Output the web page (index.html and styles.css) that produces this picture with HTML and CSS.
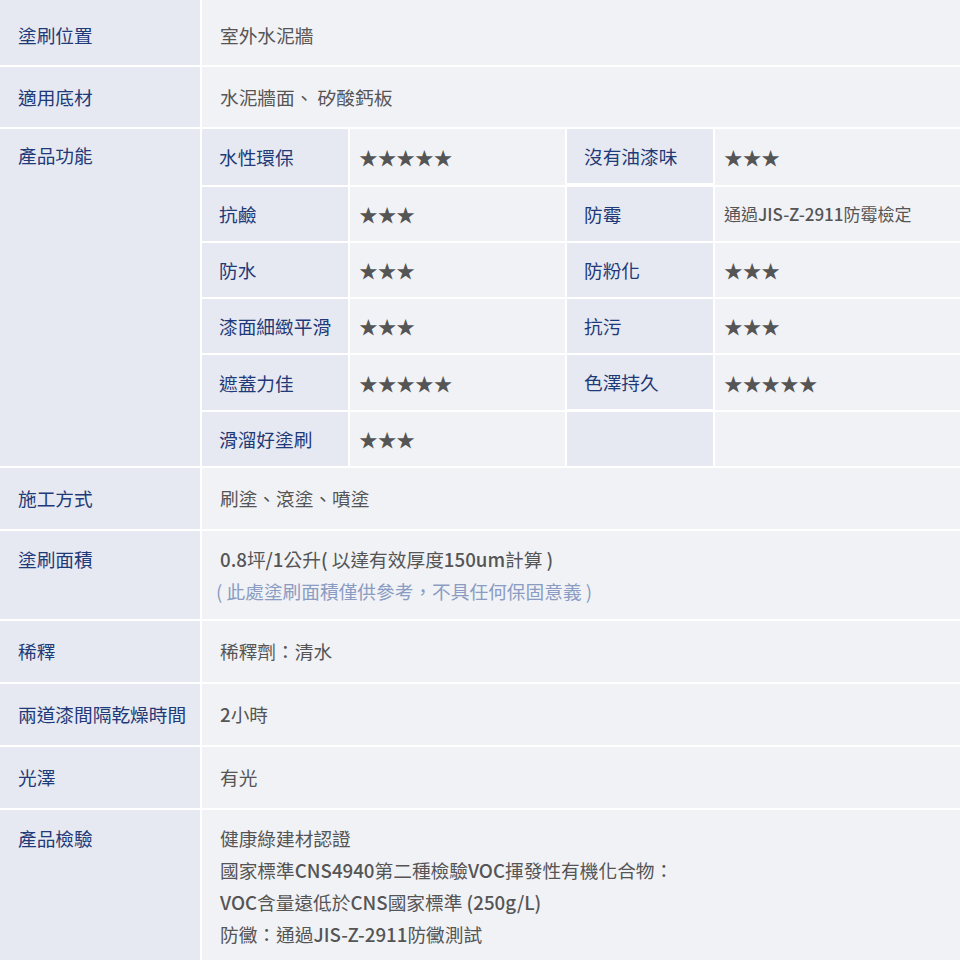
FILE: index.html
```html
<!DOCTYPE html>
<html lang="zh-Hant">
<head>
<meta charset="utf-8">
<title>產品規格</title>
<link rel="stylesheet" href="styles.css">
</head>
<body>
<div class="spec">
  <div class="row first">
    <div class="lab">塗刷位置</div>
    <div class="val">室外水泥牆</div>
  </div>
  <div class="row second">
    <div class="lab">適用底材</div>
    <div class="val">水泥牆面、 矽酸鈣板</div>
  </div>
  <div class="row feat">
    <div class="lab lab-top">產品功能</div>
    <div class="inner">
      <div class="ilab h56">水性環保</div><div class="ival">★★★★★</div>
      <div class="ilab">沒有油漆味</div><div class="ival">★★★</div>
      <div class="ilab h54">抗鹼</div><div class="ival">★★★</div>
      <div class="ilab">防霉</div><div class="ival small">通過<span class="lat">JIS-Z-2911</span>防霉檢定</div>
      <div class="ilab h54">防水</div><div class="ival">★★★</div>
      <div class="ilab">防粉化</div><div class="ival">★★★</div>
      <div class="ilab h54">漆面細緻平滑</div><div class="ival">★★★</div>
      <div class="ilab">抗污</div><div class="ival">★★★</div>
      <div class="ilab h55">遮蓋力佳</div><div class="ival">★★★★★</div>
      <div class="ilab">色澤持久</div><div class="ival">★★★★★</div>
      <div class="ilab h54">滑溜好塗刷</div><div class="ival">★★★</div>
      <div class="ilab"></div><div class="ival"></div>
    </div>
  </div>
  <div class="row">
    <div class="lab">施工方式</div>
    <div class="val">刷塗、滾塗、噴塗</div>
  </div>
  <div class="row multi">
    <div class="lab">塗刷面積</div>
    <div class="val"><span class="lat">0.8</span>坪<span class="lat">/1</span>公升<span class="lat">(</span> 以達有效厚度<span class="lat">150um</span>計算 <span class="lat">)</span><br><span class="note">( 此處塗刷面積僅供參考，不具任何保固意義 )</span></div>
  </div>
  <div class="row">
    <div class="lab">稀釋</div>
    <div class="val">稀釋劑：清水</div>
  </div>
  <div class="row">
    <div class="lab">兩道漆間隔乾燥時間</div>
    <div class="val"><span class="lat">2</span>小時</div>
  </div>
  <div class="row">
    <div class="lab">光澤</div>
    <div class="val">有光</div>
  </div>
  <div class="row multi last">
    <div class="lab">產品檢驗</div>
    <div class="val">健康綠建材認證<br>國家標準<span class="lat">CNS4940</span>第二種檢驗<span class="lat">VOC</span>揮發性有機化合物：<br><span class="lat">VOC</span>含量遠低於<span class="lat">CNS</span>國家標準 <span class="lat">(250g/L)</span><br>防黴：通過<span class="lat">JIS-Z-2911</span>防黴測試</div>
  </div>
</div>
</body>
</html>
```

FILE: styles.css
```css
html, body {
  margin: 0;
  padding: 0;
  background: #ffffff;
}
body {
  font-family: "Noto Sans CJK TC", "Noto Sans", sans-serif;
  font-size: 18.7px;
  line-height: 32px;
  color: #555555;
  width: 960px;
  height: 960px;
  overflow: hidden;
}
.spec {
  display: flex;
  flex-direction: column;
  gap: 2px;
}
.row {
  display: grid;
  grid-template-columns: 200px 1fr;
  gap: 2px;
}
.lab {
  background: #e6e9f1;
  color: #1f3a78;
  padding: 14px 10px 15px 18px;
}
.val {
  background: #f1f2f6;
  padding: 14px 16px 15px 18px;
}
.row.first .lab,
.row.first .val {
  padding-top: 19px;
  padding-bottom: 14px;
}
.row.second .lab,
.row.second .val {
  padding-top: 14px;
  padding-bottom: 14px;
}
.row.multi .lab,
.row.multi .val {
  padding-top: 12px;
  padding-bottom: 12px;
}
.row.last .val {
  padding-bottom: 30px;
}
.lab-top {
  padding-top: 10px;
}
.inner {
  display: grid;
  grid-template-columns: 146px 215px 146px 1fr;
  gap: 2px;
}
.ilab {
  background: #e6e9f1;
  color: #1f3a78;
  padding: 0 8px 0 17px;
  display: flex;
  align-items: center;
  height: 54px;
}
.ilab.h56 { height: 56px; }
.ilab.h55 { height: 55px; }
.ilab.h54 { height: 54px; }
.ival {
  background: #f1f2f6;
  padding: 0 8px 0 9px;
  display: flex;
  align-items: center;
  color: #555555;
}
.ival.small {
  font-size: 17px;
}
.lat {
  font-weight: 500;
}
.note {
  color: #8a9cc2;
  margin-left: -4px;
}
```
